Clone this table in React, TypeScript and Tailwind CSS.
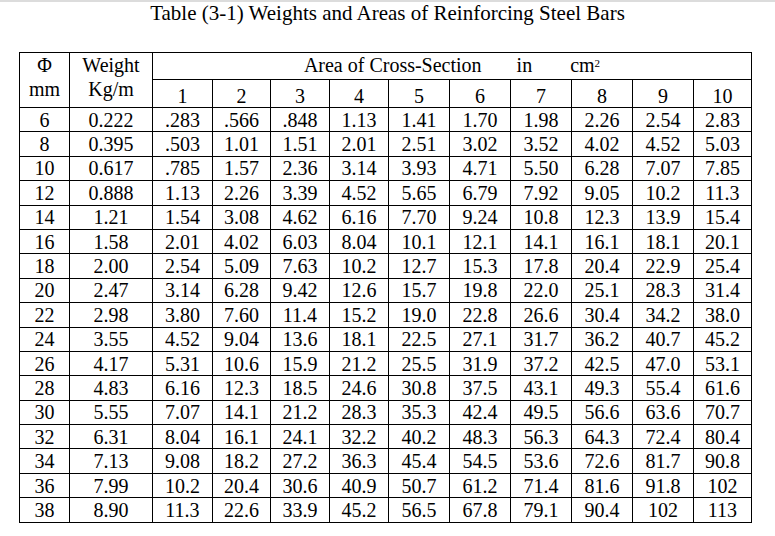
const rows: [string, string, string[]][] = [
  ['6', '0.222', ['.283', '.566', '.848', '1.13', '1.41', '1.70', '1.98', '2.26', '2.54', '2.83']],
  ['8', '0.395', ['.503', '1.01', '1.51', '2.01', '2.51', '3.02', '3.52', '4.02', '4.52', '5.03']],
  ['10', '0.617', ['.785', '1.57', '2.36', '3.14', '3.93', '4.71', '5.50', '6.28', '7.07', '7.85']],
  ['12', '0.888', ['1.13', '2.26', '3.39', '4.52', '5.65', '6.79', '7.92', '9.05', '10.2', '11.3']],
  ['14', '1.21', ['1.54', '3.08', '4.62', '6.16', '7.70', '9.24', '10.8', '12.3', '13.9', '15.4']],
  ['16', '1.58', ['2.01', '4.02', '6.03', '8.04', '10.1', '12.1', '14.1', '16.1', '18.1', '20.1']],
  ['18', '2.00', ['2.54', '5.09', '7.63', '10.2', '12.7', '15.3', '17.8', '20.4', '22.9', '25.4']],
  ['20', '2.47', ['3.14', '6.28', '9.42', '12.6', '15.7', '19.8', '22.0', '25.1', '28.3', '31.4']],
  ['22', '2.98', ['3.80', '7.60', '11.4', '15.2', '19.0', '22.8', '26.6', '30.4', '34.2', '38.0']],
  ['24', '3.55', ['4.52', '9.04', '13.6', '18.1', '22.5', '27.1', '31.7', '36.2', '40.7', '45.2']],
  ['26', '4.17', ['5.31', '10.6', '15.9', '21.2', '25.5', '31.9', '37.2', '42.5', '47.0', '53.1']],
  ['28', '4.83', ['6.16', '12.3', '18.5', '24.6', '30.8', '37.5', '43.1', '49.3', '55.4', '61.6']],
  ['30', '5.55', ['7.07', '14.1', '21.2', '28.3', '35.3', '42.4', '49.5', '56.6', '63.6', '70.7']],
  ['32', '6.31', ['8.04', '16.1', '24.1', '32.2', '40.2', '48.3', '56.3', '64.3', '72.4', '80.4']],
  ['34', '7.13', ['9.08', '18.2', '27.2', '36.3', '45.4', '54.5', '53.6', '72.6', '81.7', '90.8']],
  ['36', '7.99', ['10.2', '20.4', '30.6', '40.9', '50.7', '61.2', '71.4', '81.6', '91.8', '102']],
  ['38', '8.90', ['11.3', '22.6', '33.9', '45.2', '56.5', '67.8', '79.1', '90.4', '102', '113']],
];

const widths = [50, 83, 60, 58, 59, 59, 61, 61, 61, 61, 61, 58];

const cell = 'border border-black p-0 text-center leading-[22px]';

export default function App() {
  return (
    <div className="h-[536px] w-[775px] overflow-hidden bg-white font-[family-name:'Liberation_Serif','Times_New_Roman',serif] text-[20px] text-black">
      <div className="h-[2px] bg-[#dcdcdc]" />
      <div className="text-center text-[21px] leading-[22px]">Table (3-1) Weights and Areas of Reinforcing Steel Bars</div>
      <table className="ml-[19px] mt-[28px] table-fixed border-collapse">
        <colgroup>
          {widths.map((w, i) => (
            <col key={i} style={{ width: w }} />
          ))}
        </colgroup>
        <thead>
          <tr className="h-[27px]">
            <td rowSpan={2} className={`${cell} pb-[6px] leading-[24px]`}>
              Φ<br />mm
            </td>
            <td rowSpan={2} className={`${cell} pb-[6px] leading-[24px]`}>
              Weight<br />Kg/m
            </td>
            <td colSpan={10} className={`${cell} pb-[2px]`}>
              Area of Cross-Section
              <span className="ml-[35px]">in</span>
              <span className="ml-[38px]">
                cm<sup className="text-[11px]">2</sup>
              </span>
            </td>
          </tr>
          <tr className="h-[28px]">
            {Array.from({ length: 10 }, (_, i) => (
              <td key={i} className={`${cell} pt-[5px]`}>
                {i + 1}
              </td>
            ))}
          </tr>
        </thead>
        <tbody>
          {rows.map(([d, w, areas]) => (
            <tr key={d} className="h-[24.4px]">
              <td className={cell}>{d}</td>
              <td className={cell}>{w}</td>
              {areas.map((a, i) => (
                <td key={i} className={cell}>
                  {a}
                </td>
              ))}
            </tr>
          ))}
        </tbody>
      </table>
    </div>
  );
}
